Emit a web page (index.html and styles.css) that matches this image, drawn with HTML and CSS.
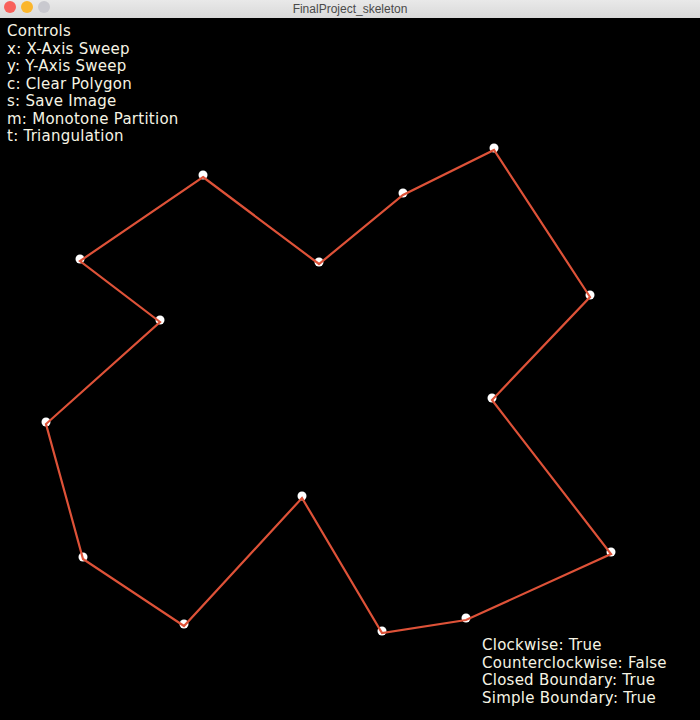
FILE: index.html
```html
<!DOCTYPE html>
<html>
<head>
<meta charset="utf-8">
<link rel="stylesheet" href="styles.css">
</head>
<body>
<div class="window">
  <div class="titlebar">
    <div class="lights">
      <span class="light red"></span>
      <span class="light yellow"></span>
      <span class="light gray"></span>
    </div>
    <div class="title">FinalProject_skeleton</div>
  </div>
  <div class="canvas">
    <svg class="drawing" width="700" height="702" viewBox="0 18 700 702">
      <g fill="#ffffff">
        <circle cx="203" cy="175" r="4.5"/>
        <circle cx="319" cy="262" r="4.5"/>
        <circle cx="403" cy="193" r="4.5"/>
        <circle cx="494" cy="148" r="4.5"/>
        <circle cx="590" cy="295" r="4.5"/>
        <circle cx="492" cy="398" r="4.5"/>
        <circle cx="611" cy="552" r="4.5"/>
        <circle cx="466" cy="618" r="4.5"/>
        <circle cx="382" cy="631" r="4.5"/>
        <circle cx="302" cy="496" r="4.5"/>
        <circle cx="184" cy="624" r="4.5"/>
        <circle cx="83" cy="557" r="4.5"/>
        <circle cx="46" cy="422" r="4.5"/>
        <circle cx="160" cy="320" r="4.5"/>
        <circle cx="80" cy="259" r="4.5"/>
      </g>
      <polygon fill="none" stroke="#de5238" stroke-width="2.2" stroke-linejoin="miter"
        points="203,177 319,264 403,195 494,150 590,297 492,400 611,554 466,620 382,633 302,498 184,626 83,559 46,424 160,322 80,261"/>
    </svg>
    <div class="controls">
      <div>Controls</div>
      <div>x: X-Axis Sweep</div>
      <div>y: Y-Axis Sweep</div>
      <div>c: Clear Polygon</div>
      <div>s: Save Image</div>
      <div>m: Monotone Partition</div>
      <div>t: Triangulation</div>
    </div>
    <div class="status">
      <div>Clockwise: True</div>
      <div>Counterclockwise: False</div>
      <div>Closed Boundary: True</div>
      <div>Simple Boundary: True</div>
    </div>
  </div>
</div>
</body>
</html>
```
FILE: styles.css
```css
html, body {
  margin: 0;
  padding: 0;
  background: #000;
}
.window {
  width: 700px;
  height: 720px;
  display: flex;
  flex-direction: column;
  overflow: hidden;
}
.titlebar {
  height: 18px;
  flex: none;
  position: relative;
  background: linear-gradient(#e9e9e9, #d9d9d9);
  display: flex;
  align-items: center;
  justify-content: center;
}
.lights {
  position: absolute;
  left: 4px;
  top: 1px;
  display: flex;
  gap: 5px;
}
.light {
  width: 12px;
  height: 12px;
  border-radius: 50%;
  display: block;
}
.red { background: #f8605a; }
.yellow { background: #fbb62c; }
.gray { background: #c9c9cf; }
.title {
  font-family: "Liberation Sans", Arial, sans-serif;
  font-size: 12px;
  color: #4a4a4a;
}
.canvas {
  flex: 1;
  position: relative;
  background: #000;
  display: flex;
  flex-direction: column;
  justify-content: space-between;
  font-family: "DejaVu Sans", sans-serif;
  font-size: 15px;
  line-height: 17.5px;
  letter-spacing: 0.25px;
  color: #f6f4e4;
}
.drawing {
  position: absolute;
  left: 0;
  top: 0;
}
.controls {
  position: relative;
  padding: 5px 0 0 7px;
}
.status {
  position: relative;
  padding: 0 0 13px 482px;
}
```
